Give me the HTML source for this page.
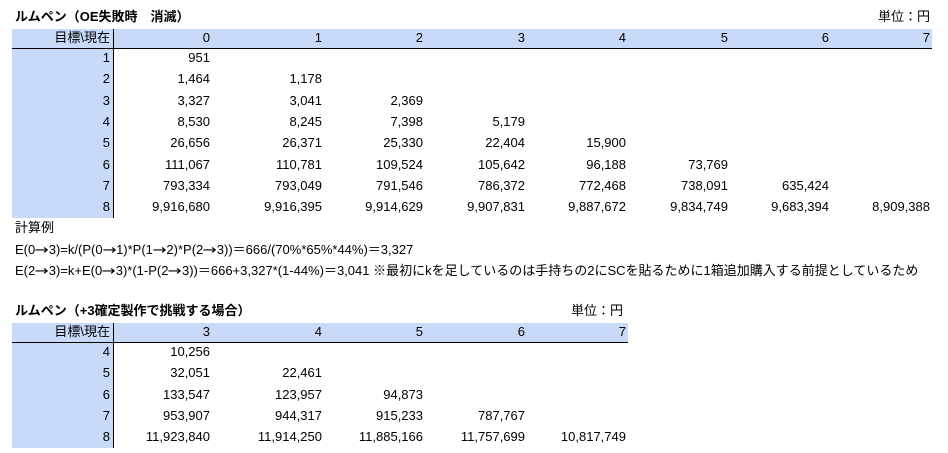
<!DOCTYPE html>
<html><head><meta charset="utf-8"><style>
body{margin:0;width:948px;height:453px;background:#fff;position:relative;overflow:hidden;font-family:"Liberation Sans","Noto Sans CJK JP",sans-serif;font-size:13px;color:#000}
.a{position:absolute;white-space:nowrap;line-height:16px}
.r{text-align:right}
.b{font-weight:bold}
.fill{position:absolute;background:#c9daf8}
.ln{position:absolute;background:#000}
i{font-style:normal;font-family:"DejaVu Sans",sans-serif;font-size:13px;display:inline-block;width:13.5px;text-align:center;transform:scaleX(1.3)}
</style></head><body>
<div class="a b" style="left:15px;top:9px">ルムペン（OE失敗時　消滅）</div>
<div class="a" style="right:18px;top:9px">単位：円</div>
<div class="fill" style="left:12px;top:29px;width:920px;height:19px"></div>
<div class="fill" style="left:12px;top:48px;width:101px;height:170px"></div>
<div class="ln" style="left:12px;top:48px;width:920px;height:1px"></div>
<div class="ln" style="left:113px;top:29px;width:1px;height:189px"></div>

<div class="fill" style="left:12px;top:323px;width:616px;height:19px"></div>
<div class="fill" style="left:12px;top:342px;width:101px;height:106px"></div>
<div class="ln" style="left:12px;top:342px;width:616px;height:1px"></div>
<div class="ln" style="left:113px;top:323px;width:1px;height:125px"></div>

<div class="a b" style="left:15px;top:303px">ルムペン（+3確定製作で挑戦する場合）</div>
<div class="a" style="left:571px;top:303px">単位：円</div>

<div class="a" style="left:15px;top:220px">計算例</div>
<div class="a" style="left:15px;top:242px">E(0<i>→</i>3)=k/(P(0<i>→</i>1)*P(1<i>→</i>2)*P(2<i>→</i>3))＝666/(70%*65%*44%)＝3,327</div>
<div class="a" style="left:15px;top:263px">E(2<i>→</i>3)=k+E(0<i>→</i>3)*(1-P(2<i>→</i>3))＝666+3,327*(1-44%)＝3,041 ※最初にkを足しているのは手持ちの2にSCを貼るために1箱追加購入する前提としているため</div>

<script>
function put(x,y,t){var d=document.createElement('div');d.className='a r';d.style.right=(948-x)+'px';d.style.top=y+'px';d.textContent=t;document.body.appendChild(d);}
var R=[210,322,423,525,626,728,829,930];
put(110,30,'目標\\現在');
for(var i=0;i<8;i++)put(R[i],30,String(i));
var d1=[["951"],["1,464","1,178"],["3,327","3,041","2,369"],["8,530","8,245","7,398","5,179"],["26,656","26,371","25,330","22,404","15,900"],["111,067","110,781","109,524","105,642","96,188","73,769"],["793,334","793,049","791,546","786,372","772,468","738,091","635,424"],["9,916,680","9,916,395","9,914,629","9,907,831","9,887,672","9,834,749","9,683,394","8,909,388"]];
for(var r=0;r<8;r++){var y=50+r*21.3;put(110,y,String(r+1));for(var c=0;c<d1[r].length;c++)put(R[c],y,d1[r][c]);}
put(110,324,'目標\\現在');
for(var i=0;i<5;i++)put(R[i],324,String(i+3));
var d2=[["10,256"],["32,051","22,461"],["133,547","123,957","94,873"],["953,907","944,317","915,233","787,767"],["11,923,840","11,914,250","11,885,166","11,757,699","10,817,749"]];
for(var r=0;r<5;r++){var y=344+r*21.3;put(110,y,String(r+4));for(var c=0;c<d2[r].length;c++)put(R[c],y,d2[r][c]);}
</script>
</body></html>
